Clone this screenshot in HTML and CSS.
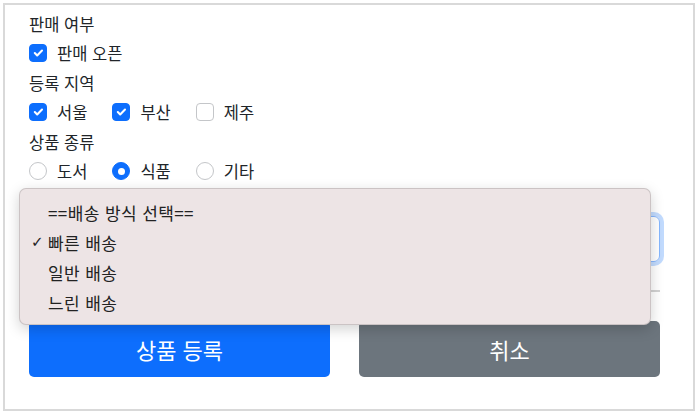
FILE: index.html
```html
<!DOCTYPE html>
<html lang="ko">
<head>
  <meta charset="UTF-8" />
  <title>상품 등록</title>
  <link rel="stylesheet" href="styles.css">
</head>
<body>
  <div class="frame">
    <form class="form">
      <div class="field-label">판매 여부</div>
      <div class="check-row">
        <label class="check">
          <span class="box checked"><svg viewBox="0 0 20 20"><path d="M6 10l3 3 6-6" /></svg></span>판매 오픈
        </label>
      </div>

      <div class="field-label">등록 지역</div>
      <div class="check-row">
        <label class="check">
          <span class="box checked"><svg viewBox="0 0 20 20"><path d="M6 10l3 3 6-6" /></svg></span>서울
        </label>
        <label class="check">
          <span class="box checked"><svg viewBox="0 0 20 20"><path d="M6 10l3 3 6-6" /></svg></span>부산
        </label>
        <label class="check">
          <span class="box"></span>제주
        </label>
      </div>

      <div class="field-label">상품 종류</div>
      <div class="check-row">
        <label class="check">
          <span class="box radio"></span>도서
        </label>
        <label class="check">
          <span class="box radio checked"><span class="dot"></span></span>식품
        </label>
        <label class="check">
          <span class="box radio"></span>기타
        </label>
      </div>

      <!-- select sits under the open popup, only its right edge shows -->
      <div class="select focused">
        <svg class="chevron" viewBox="0 0 16 16"><path d="M2 5l6 6 6-6" /></svg>
      </div>

      <hr class="divider">

      <div class="actions">
        <button type="button" class="btn btn-primary">상품 등록</button>
        <button type="button" class="btn btn-secondary">취소</button>
      </div>
    </form>

    <!-- open native select popup -->
    <ul class="select-menu">
      <li>==배송 방식 선택==</li>
      <li class="selected"><span class="tick">✓</span>빠른 배송</li>
      <li>일반 배송</li>
      <li>느린 배송</li>
    </ul>
  </div>
</body>
</html>
```

FILE: styles.css
```css
body {
  margin: 0;
  font-family: "Noto Sans CJK KR", "Noto Sans", sans-serif;
  color: #212529;
  background-color: #fff;
}

.frame {
  position: relative;
  box-sizing: border-box;
  width: 692px;
  height: 408px;
  margin: 3px;
  border: 2px solid #d9d9d9;
}

.form {
  padding: 7px 33px 0 24px;
}

.field-label {
  font-size: 16.5px;
  line-height: 24px;
  margin-bottom: 5px;
}

.check-row {
  display: flex;
  gap: 25px;
  height: 24px;
  margin-bottom: 6px;
}

.check {
  display: flex;
  align-items: center;
  font-size: 16.5px;
  line-height: 24px;
}

.box {
  box-sizing: border-box;
  width: 18px;
  height: 18px;
  margin-right: 10px;
  border: 1px solid #c4c6c9;
  border-radius: 4px;
  background-color: #fff;
  display: flex;
  align-items: center;
  justify-content: center;
}

.box.checked {
  background-color: #0d6efd;
  border-color: #0d6efd;
}

.box svg {
  width: 16px;
  height: 16px;
  fill: none;
  stroke: #fff;
  stroke-width: 2.6;
  stroke-linecap: round;
  stroke-linejoin: round;
}

.box.radio {
  border-radius: 50%;
}

.box.radio .dot {
  width: 7px;
  height: 7px;
  border-radius: 50%;
  background-color: #fff;
}

.select {
  box-sizing: border-box;
  height: 46px;
  margin-top: 33px;
  display: flex;
  align-items: center;
  justify-content: flex-end;
  padding: 0 16px;
  border: 1px solid #dee2e6;
  border-radius: 6px;
}

.select.focused {
  border-color: #86b7fe;
  box-shadow: 0 0 0 4px rgba(13, 110, 253, 0.25);
}

.chevron {
  width: 16px;
  height: 16px;
  fill: none;
  stroke: #343a40;
  stroke-width: 2;
}

.divider {
  margin: 28px 0 29px;
  border: 0;
  border-top: 2px solid #d2d2d2;
}

.actions {
  display: flex;
  gap: 29px;
}

.btn {
  flex: 1;
  height: 56px;
  border: 0;
  border-radius: 5px;
  font-family: inherit;
  font-size: 22px;
  color: #fff;
}

.btn-primary {
  background-color: #0d6efd;
}

.btn-secondary {
  background-color: #6c757d;
}

.select-menu {
  position: absolute;
  left: 14px;
  top: 183px;
  width: 632px;
  box-sizing: border-box;
  height: 137px;
  margin: 0;
  padding: 8px 0;
  list-style: none;
  background-color: #ede4e5;
  border: 1px solid rgba(0, 0, 0, 0.14);
  border-radius: 7px;
  box-shadow: 0 4px 14px rgba(0, 0, 0, 0.18);
}

.select-menu li {
  display: flex;
  align-items: center;
  height: 30px;
  padding-left: 28px;
  font-size: 17px;
  letter-spacing: 0.4px;
  color: #222;
}

.select-menu li.selected {
  padding-left: 11px;
}

.tick {
  width: 17px;
  font-family: "DejaVu Sans", sans-serif;
  font-size: 15px;
  font-weight: bold;
  letter-spacing: 0;
}
```
